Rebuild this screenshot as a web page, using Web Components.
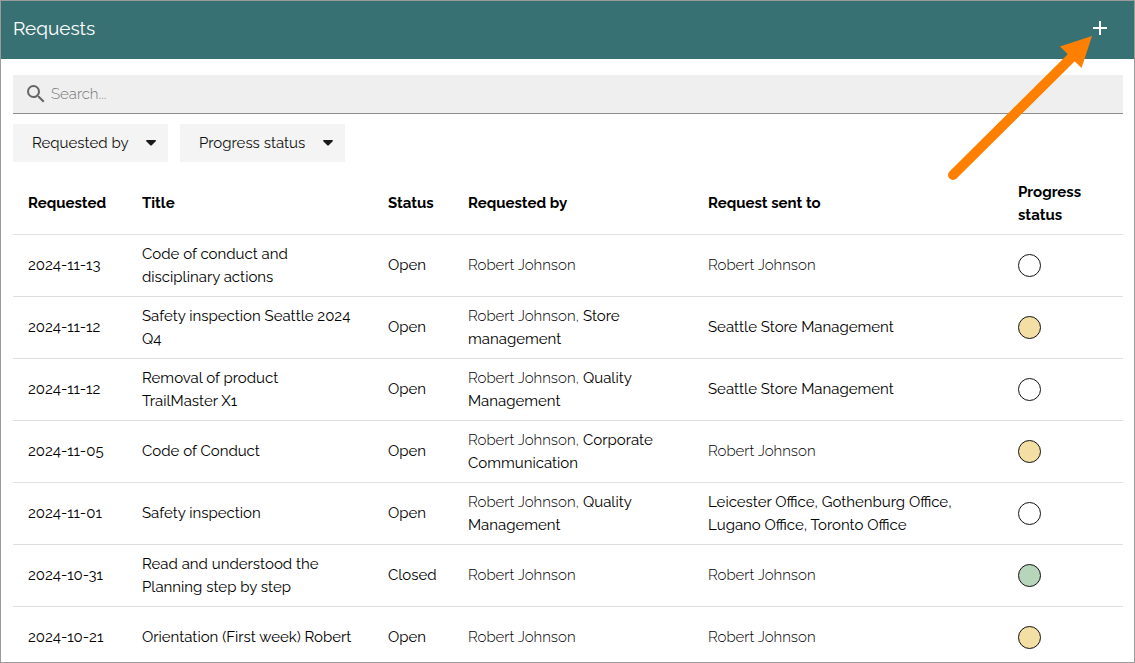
<!DOCTYPE html>
<html lang="en">
<head>
<meta charset="utf-8">
<title>Requests</title>
<style>
  body { margin: 0; font-family: Raleway, Lato, sans-serif; font-size: 15px; line-height: 23px; color: #000; background: #fff; }
</style>
</head>
<body>
<request-page>
  <app-bar slot="bar">Requests</app-bar>
  <search-field></search-field>
  <filter-bar>
    <filter-select label="Requested by" size="short"></filter-select>
    <filter-select label="Progress status"></filter-select>
  </filter-bar>
  <request-table></request-table>
  <callout-arrow slot="overlay"></callout-arrow>
</request-page>

<script>
class Base extends HTMLElement {
  connectedCallback() {
    if (this.shadowRoot) return;
    this.attachShadow({ mode: "open" }).innerHTML = this.render();
  }
}

customElements.define("request-page", class extends Base {
  render() {
    return `<style>
      :host { display: block; position: relative; box-sizing: border-box; height: 100vh; overflow: hidden; border: 1px solid #9b9b9b; }
      main { display: flex; flex-direction: column; padding: 16px 11px 0 12px; }
    </style>
    <slot name="bar"></slot>
    <main><slot></slot></main>
    <slot name="overlay"></slot>`;
  }
});

customElements.define("app-bar", class extends Base {
  render() {
    return `<style>
      :host { display: flex; align-items: center; justify-content: space-between; box-sizing: border-box; height: 58px; padding: 0 22px 4px 12px; background: #387174; color: #fff; }
      h1 { margin: 0; font-size: 19px; font-weight: 400; line-height: 24px; }
      button { display: flex; padding: 0; border: 0; background: none; color: inherit; cursor: pointer; }
    </style>
    <h1><slot></slot></h1>
    <button type="button" aria-label="Add request">
      <svg width="24" height="24" viewBox="0 0 24 24" fill="currentColor"><path d="M19 13h-6v6h-2v-6H5v-2h6V5h2v6h6z"/></svg>
    </button>`;
  }
});

customElements.define("search-field", class extends Base {
  render() {
    return `<style>
      :host { display: block; }
      label { display: flex; align-items: center; gap: 3px; height: 38px; padding: 0 11px; background: #efefef; border-bottom: 1px solid #8c8c8c; color: #666; }
      svg { flex: none; }
      input { flex: 1; min-width: 0; padding: 0; border: 0; outline: 0; background: none; font: inherit; font-weight: 300; color: #111; }
      input::placeholder { color: #777; opacity: 1; }
    </style>
    <label>
      <svg width="24" height="24" viewBox="0 0 24 24" fill="currentColor"><path d="M15.500 14h-.79l-.28-.27A6.471 6.471 0 0 0 16 9.500 6.500 6.500 0 1 0 9.500 16c1.610 0 3.090-.59 4.230-1.570l.27.28v.79l5 4.990L20.490 19l-4.990-5zm-6 0C7.010 14 5 11.990 5 9.500S7.010 5 9.500 5 14 7.010 14 9.500 11.990 14 9.500 14z"/></svg>
      <input type="search" placeholder="Search..." aria-label="Search">
    </label>`;
  }
});

customElements.define("filter-bar", class extends Base {
  render() {
    return `<style>:host { display: flex; gap: 12px; padding: 10px 0 11px; }</style><slot></slot>`;
  }
});

customElements.define("filter-select", class extends Base {
  render() {
    const label = this.getAttribute("label");
    return `<style>
      :host { display: grid; align-items: center; width: 165px; }
      :host([size="short"]) { width: 155px; }
      select, svg { grid-area: 1 / 1; }
      select { appearance: none; width: 100%; height: 38px; padding: 0 30px 0 19px; border: 0; border-radius: 0; background: #f4f4f4; font: inherit; color: #111; cursor: pointer; }
      svg { justify-self: end; margin-right: 12px; pointer-events: none; }
    </style>
    <select aria-label="${label}"><option>${label}</option></select>
    <svg width="10" height="6" viewBox="0 0 10 6"><path d="M0 1Q0 0 1 0H9Q10 0 10 1L6 5Q5 6 4 5Z" fill="#1a1a1a"/></svg>`;
  }
});

customElements.define("status-dot", class extends Base {
  render() {
    return `<style>
      :host { display: block; box-sizing: border-box; width: 23px; height: 23px; border: 1px solid #111; border-radius: 50%; background: #fff; }
      :host([state="ongoing"]) { background: #f3dfa4; }
      :host([state="done"]) { background: #b7d5bb; }
    </style>`;
  }
});

const person = "<span>Robert Johnson</span>";
const withTeam = team => `<span>Robert Johnson,</span> ${team}`;
const requests = [
  ["2024-11-13", "Code of conduct and disciplinary actions", "Open", person, person, "new"],
  ["2024-11-12", "Safety inspection Seattle 2024 Q4", "Open", withTeam("Store management"), "Seattle Store Management", "ongoing"],
  ["2024-11-12", "Removal of product TrailMaster X1", "Open", withTeam("Quality Management"), "Seattle Store Management", "new"],
  ["2024-11-05", "Code of Conduct", "Open", withTeam("Corporate Communication"), person, "ongoing"],
  ["2024-11-01", "Safety inspection", "Open", withTeam("Quality Management"), "Leicester Office, Gothenburg Office, Lugano Office, Toronto Office", "new"],
  ["2024-10-31", "Read and understood the Planning step by step", "Closed", person, person, "done"],
  ["2024-10-21", "Orientation (First week) Robert", "Open", person, person, "ongoing"]
];

customElements.define("request-table", class extends Base {
  render() {
    const rows = requests.map(r => `<tr>${r.slice(0, 5).map(c => `<td>${c}</td>`).join("")}<td><status-dot state="${r[5]}" role="img" aria-label="${r[5]}"></status-dot></td></tr>`).join("");
    return `<style>
      :host { display: block; }
      table { width: 100%; table-layout: fixed; border-collapse: separate; border-spacing: 0; font-variant-numeric: oldstyle-nums; }
      th, td { box-sizing: border-box; height: 62px; padding: 0 15px; text-align: left; vertical-align: middle; border-bottom: 1px solid #dedede; }
      th { font-weight: 700; color: #000; }
      span { font-weight: 300; }
      .date { width: 114px; }
      .title { width: 246px; }
      .status { width: 80px; }
      .by { width: 240px; }
      .sent { width: auto; }
      .progress { width: 120px; }
      td:nth-child(2) { padding-right: 19px; }
      td:nth-child(5) { padding-right: 40px; }
    </style>
    <table>
      <colgroup><col class="date"><col class="title"><col class="status"><col class="by"><col class="sent"><col class="progress"></colgroup>
      <thead><tr><th>Requested</th><th>Title</th><th>Status</th><th>Requested by</th><th>Request sent to</th><th>Progress status</th></tr></thead>
      <tbody>${rows}</tbody>
    </table>`;
  }
});

customElements.define("callout-arrow", class extends Base {
  render() {
    return `<style>
      :host { display: block; position: absolute; top: 29px; right: 34px; pointer-events: none; }
      svg { display: block; }
    </style>
    <svg width="160" height="155" viewBox="0 0 160 155" aria-hidden="true">
      <path d="M13 145L132 27" stroke="#ff8000" stroke-width="10" stroke-linecap="round"/>
      <path d="M152 6L120 16.500L141.500 38Z" fill="#ff8000"/>
    </svg>`;
  }
});
</script>
</body>
</html>
